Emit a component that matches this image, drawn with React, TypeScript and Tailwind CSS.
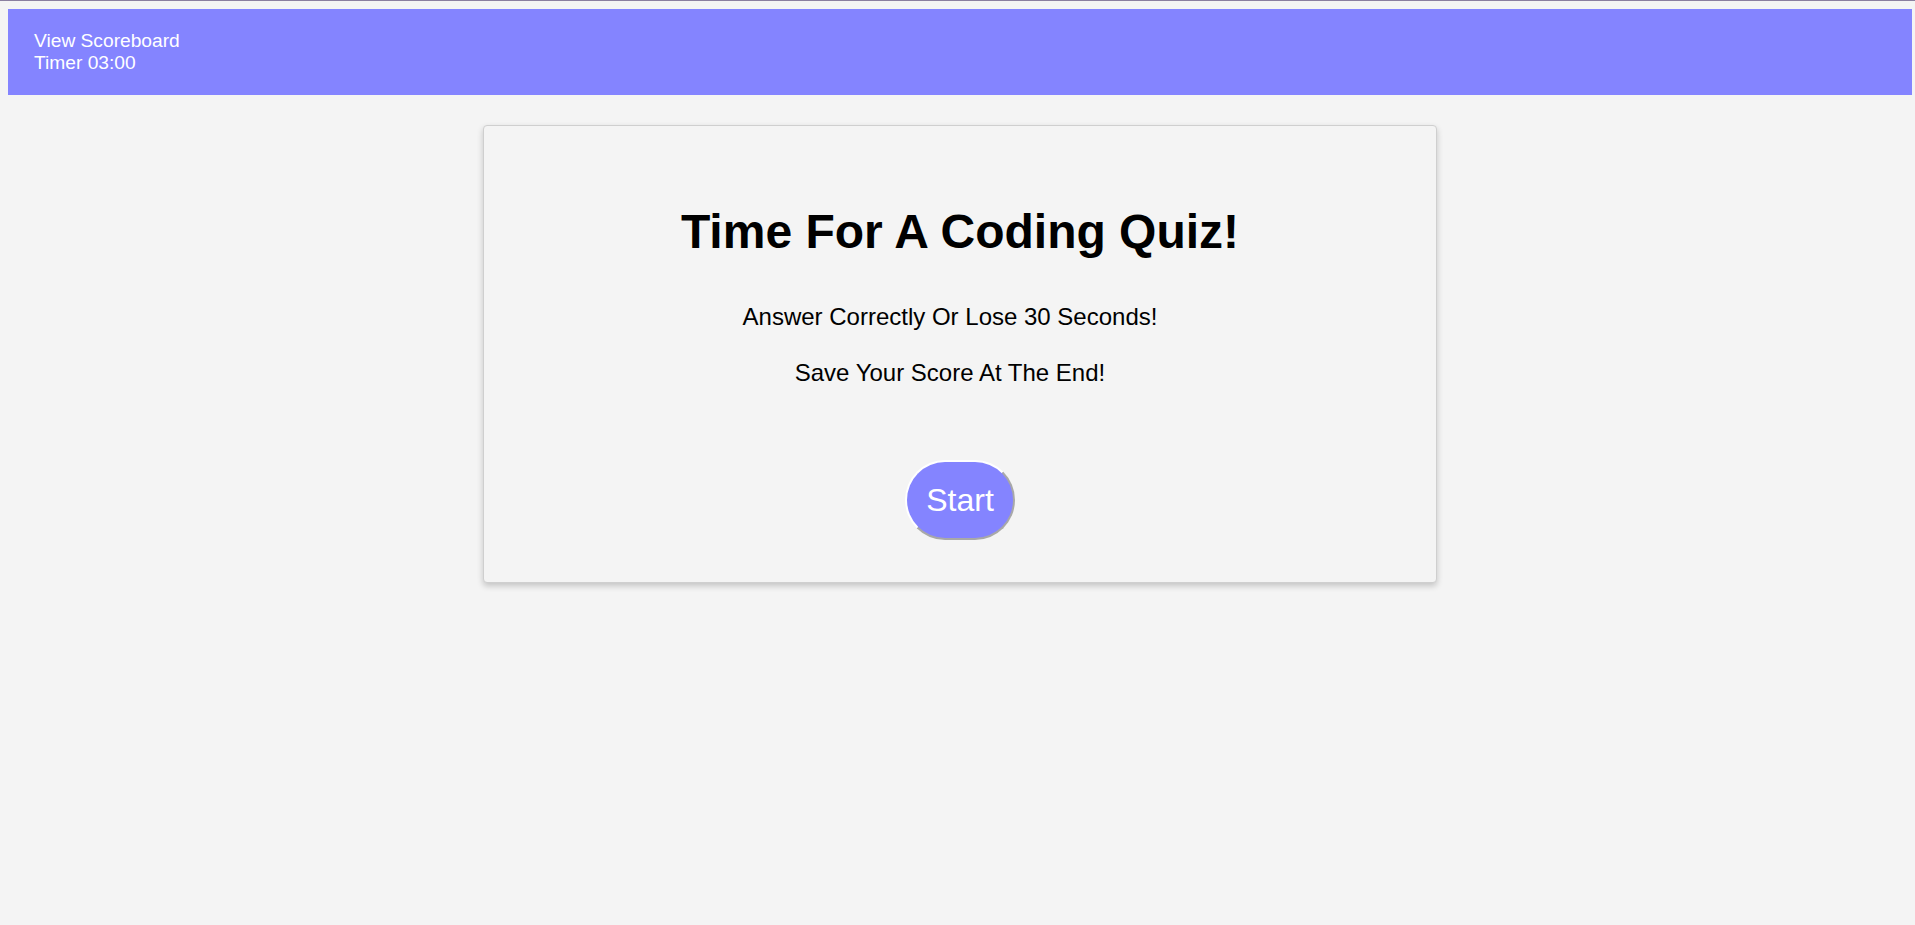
export default function App() {
  return (
    <div
      className="min-h-[925px] bg-[#f4f4f4] border-t border-[#8a7f9f] pt-[8px]"
      style={{ fontFamily: '"Liberation Sans", Arial, sans-serif' }}
    >
      <header className="ml-[8px] w-[1904px] h-[86px] bg-[#8484ff] text-white text-[19.2px] leading-[22px] pl-[26px] pt-[21px]">
        <div>View Scoreboard</div>
        <div>Timer 03:00</div>
      </header>

      <main className="mt-[30px] ml-[483px] w-[954px] h-[458px] bg-[#f4f4f4] border border-[#cfcfcf] rounded-[4px] shadow-[0_3px_6px_rgba(0,0,0,0.2)] flex flex-col items-center pt-[77px]">
        <h1 className="text-[48px] font-bold text-black leading-[58px]">Time For A Coding Quiz!</h1>
        <p className="mt-[42px] pr-[20px] text-[24px] leading-[28px] text-black">Answer Correctly Or Lose 30 Seconds!</p>
        <p className="mt-[28px] pr-[20px] text-[24px] leading-[28px] text-black">Save Your Score At The End!</p>
        <button className="mt-[73px] w-[110px] h-[80px] rounded-[40px] bg-[#8484ff] text-white text-[32px] border-2 border-t-white border-l-white border-r-[#a8a8a8] border-b-[#a8a8a8]">
          Start
        </button>
      </main>
    </div>
  );
}
